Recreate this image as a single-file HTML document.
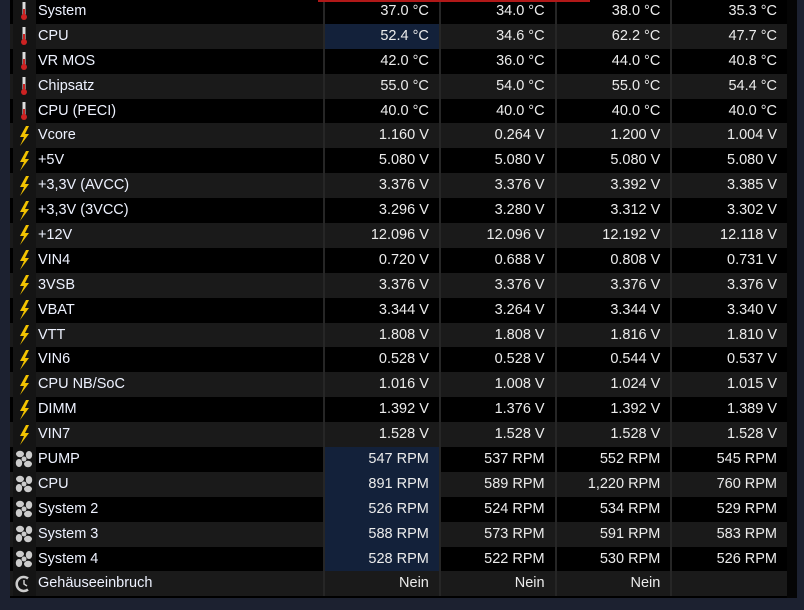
<!DOCTYPE html><html><head><meta charset="utf-8"><style>
body{margin:0;width:804px;height:610px;background:#1c2130;overflow:hidden;font-family:"Liberation Sans",sans-serif;font-size:14.5px;}
#t{position:absolute;left:10px;top:-1px;width:777px;height:599px;background:#000;}
#sb{position:absolute;left:787px;top:0;width:10px;height:598px;background:#050505;}
.r{height:24.9px;display:flex;position:relative;box-sizing:border-box}
.r:nth-child(odd){background:#000}.r:nth-child(even){background:#1a1a1a}
.i{width:23px;height:100%;background:#141414;display:flex;align-items:center;justify-content:center;margin-left:3px}
.l{width:286px;color:#eef2ff;line-height:25.5px;padding-left:2px}
.v{height:100%;line-height:25.5px;text-align:right;color:#ececec;border-left:2px solid #262626;box-sizing:border-box;padding-right:10px}
.c1{width:116px}.c2{width:116px}.c3{width:116px}.c4{width:117px}
.h{background:#13213a}
#red{position:absolute;left:318px;top:0;width:272px;height:2px;background:#b01818}
</style></head><body>
<div id="t">
<div class="r"><div class="i"><svg width="8" height="20"><rect x="2.5" y="1" width="3" height="13" fill="#ddd"/><rect x="3" y="8" width="2" height="8" fill="#c22"/><circle cx="4" cy="16" r="3" fill="#c22"/></svg></div><div class="l">System</div><div class="v c1">37.0 °C</div><div class="v c2">34.0 °C</div><div class="v c3">38.0 °C</div><div class="v c4">35.3 °C</div></div>
<div class="r"><div class="i"><svg width="8" height="20"><rect x="2.5" y="1" width="3" height="13" fill="#ddd"/><rect x="3" y="8" width="2" height="8" fill="#c22"/><circle cx="4" cy="16" r="3" fill="#c22"/></svg></div><div class="l">CPU</div><div class="v c1 h">52.4 °C</div><div class="v c2">34.6 °C</div><div class="v c3">62.2 °C</div><div class="v c4">47.7 °C</div></div>
<div class="r"><div class="i"><svg width="8" height="20"><rect x="2.5" y="1" width="3" height="13" fill="#ddd"/><rect x="3" y="8" width="2" height="8" fill="#c22"/><circle cx="4" cy="16" r="3" fill="#c22"/></svg></div><div class="l">VR MOS</div><div class="v c1">42.0 °C</div><div class="v c2">36.0 °C</div><div class="v c3">44.0 °C</div><div class="v c4">40.8 °C</div></div>
<div class="r"><div class="i"><svg width="8" height="20"><rect x="2.5" y="1" width="3" height="13" fill="#ddd"/><rect x="3" y="8" width="2" height="8" fill="#c22"/><circle cx="4" cy="16" r="3" fill="#c22"/></svg></div><div class="l">Chipsatz</div><div class="v c1">55.0 °C</div><div class="v c2">54.0 °C</div><div class="v c3">55.0 °C</div><div class="v c4">54.4 °C</div></div>
<div class="r"><div class="i"><svg width="8" height="20"><rect x="2.5" y="1" width="3" height="13" fill="#ddd"/><rect x="3" y="8" width="2" height="8" fill="#c22"/><circle cx="4" cy="16" r="3" fill="#c22"/></svg></div><div class="l">CPU (PECI)</div><div class="v c1">40.0 °C</div><div class="v c2">40.0 °C</div><div class="v c3">40.0 °C</div><div class="v c4">40.0 °C</div></div>
<div class="r"><div class="i"><svg width="14" height="22"><path d="M9 1L3 12h4l-4 9 9-12H8l4-8z" fill="#f2c200"/></svg></div><div class="l">Vcore</div><div class="v c1">1.160 V</div><div class="v c2">0.264 V</div><div class="v c3">1.200 V</div><div class="v c4">1.004 V</div></div>
<div class="r"><div class="i"><svg width="14" height="22"><path d="M9 1L3 12h4l-4 9 9-12H8l4-8z" fill="#f2c200"/></svg></div><div class="l">+5V</div><div class="v c1">5.080 V</div><div class="v c2">5.080 V</div><div class="v c3">5.080 V</div><div class="v c4">5.080 V</div></div>
<div class="r"><div class="i"><svg width="14" height="22"><path d="M9 1L3 12h4l-4 9 9-12H8l4-8z" fill="#f2c200"/></svg></div><div class="l">+3,3V (AVCC)</div><div class="v c1">3.376 V</div><div class="v c2">3.376 V</div><div class="v c3">3.392 V</div><div class="v c4">3.385 V</div></div>
<div class="r"><div class="i"><svg width="14" height="22"><path d="M9 1L3 12h4l-4 9 9-12H8l4-8z" fill="#f2c200"/></svg></div><div class="l">+3,3V (3VCC)</div><div class="v c1">3.296 V</div><div class="v c2">3.280 V</div><div class="v c3">3.312 V</div><div class="v c4">3.302 V</div></div>
<div class="r"><div class="i"><svg width="14" height="22"><path d="M9 1L3 12h4l-4 9 9-12H8l4-8z" fill="#f2c200"/></svg></div><div class="l">+12V</div><div class="v c1">12.096 V</div><div class="v c2">12.096 V</div><div class="v c3">12.192 V</div><div class="v c4">12.118 V</div></div>
<div class="r"><div class="i"><svg width="14" height="22"><path d="M9 1L3 12h4l-4 9 9-12H8l4-8z" fill="#f2c200"/></svg></div><div class="l">VIN4</div><div class="v c1">0.720 V</div><div class="v c2">0.688 V</div><div class="v c3">0.808 V</div><div class="v c4">0.731 V</div></div>
<div class="r"><div class="i"><svg width="14" height="22"><path d="M9 1L3 12h4l-4 9 9-12H8l4-8z" fill="#f2c200"/></svg></div><div class="l">3VSB</div><div class="v c1">3.376 V</div><div class="v c2">3.376 V</div><div class="v c3">3.376 V</div><div class="v c4">3.376 V</div></div>
<div class="r"><div class="i"><svg width="14" height="22"><path d="M9 1L3 12h4l-4 9 9-12H8l4-8z" fill="#f2c200"/></svg></div><div class="l">VBAT</div><div class="v c1">3.344 V</div><div class="v c2">3.264 V</div><div class="v c3">3.344 V</div><div class="v c4">3.340 V</div></div>
<div class="r"><div class="i"><svg width="14" height="22"><path d="M9 1L3 12h4l-4 9 9-12H8l4-8z" fill="#f2c200"/></svg></div><div class="l">VTT</div><div class="v c1">1.808 V</div><div class="v c2">1.808 V</div><div class="v c3">1.816 V</div><div class="v c4">1.810 V</div></div>
<div class="r"><div class="i"><svg width="14" height="22"><path d="M9 1L3 12h4l-4 9 9-12H8l4-8z" fill="#f2c200"/></svg></div><div class="l">VIN6</div><div class="v c1">0.528 V</div><div class="v c2">0.528 V</div><div class="v c3">0.544 V</div><div class="v c4">0.537 V</div></div>
<div class="r"><div class="i"><svg width="14" height="22"><path d="M9 1L3 12h4l-4 9 9-12H8l4-8z" fill="#f2c200"/></svg></div><div class="l">CPU NB/SoC</div><div class="v c1">1.016 V</div><div class="v c2">1.008 V</div><div class="v c3">1.024 V</div><div class="v c4">1.015 V</div></div>
<div class="r"><div class="i"><svg width="14" height="22"><path d="M9 1L3 12h4l-4 9 9-12H8l4-8z" fill="#f2c200"/></svg></div><div class="l">DIMM</div><div class="v c1">1.392 V</div><div class="v c2">1.376 V</div><div class="v c3">1.392 V</div><div class="v c4">1.389 V</div></div>
<div class="r"><div class="i"><svg width="14" height="22"><path d="M9 1L3 12h4l-4 9 9-12H8l4-8z" fill="#f2c200"/></svg></div><div class="l">VIN7</div><div class="v c1">1.528 V</div><div class="v c2">1.528 V</div><div class="v c3">1.528 V</div><div class="v c4">1.528 V</div></div>
<div class="r"><div class="i"><svg width="20" height="20" viewBox="0 0 20 20" fill="#ccc"><circle cx="10" cy="10" r="2.5"/><ellipse cx="6" cy="5" rx="4" ry="3.2"/><ellipse cx="15" cy="6" rx="3.2" ry="4"/><ellipse cx="14" cy="15" rx="4" ry="3.2"/><ellipse cx="5" cy="14" rx="3.2" ry="4"/></svg></div><div class="l">PUMP</div><div class="v c1 h">547 RPM</div><div class="v c2">537 RPM</div><div class="v c3">552 RPM</div><div class="v c4">545 RPM</div></div>
<div class="r"><div class="i"><svg width="20" height="20" viewBox="0 0 20 20" fill="#ccc"><circle cx="10" cy="10" r="2.5"/><ellipse cx="6" cy="5" rx="4" ry="3.2"/><ellipse cx="15" cy="6" rx="3.2" ry="4"/><ellipse cx="14" cy="15" rx="4" ry="3.2"/><ellipse cx="5" cy="14" rx="3.2" ry="4"/></svg></div><div class="l">CPU</div><div class="v c1 h">891 RPM</div><div class="v c2">589 RPM</div><div class="v c3">1,220 RPM</div><div class="v c4">760 RPM</div></div>
<div class="r"><div class="i"><svg width="20" height="20" viewBox="0 0 20 20" fill="#ccc"><circle cx="10" cy="10" r="2.5"/><ellipse cx="6" cy="5" rx="4" ry="3.2"/><ellipse cx="15" cy="6" rx="3.2" ry="4"/><ellipse cx="14" cy="15" rx="4" ry="3.2"/><ellipse cx="5" cy="14" rx="3.2" ry="4"/></svg></div><div class="l">System 2</div><div class="v c1 h">526 RPM</div><div class="v c2">524 RPM</div><div class="v c3">534 RPM</div><div class="v c4">529 RPM</div></div>
<div class="r"><div class="i"><svg width="20" height="20" viewBox="0 0 20 20" fill="#ccc"><circle cx="10" cy="10" r="2.5"/><ellipse cx="6" cy="5" rx="4" ry="3.2"/><ellipse cx="15" cy="6" rx="3.2" ry="4"/><ellipse cx="14" cy="15" rx="4" ry="3.2"/><ellipse cx="5" cy="14" rx="3.2" ry="4"/></svg></div><div class="l">System 3</div><div class="v c1 h">588 RPM</div><div class="v c2">573 RPM</div><div class="v c3">591 RPM</div><div class="v c4">583 RPM</div></div>
<div class="r"><div class="i"><svg width="20" height="20" viewBox="0 0 20 20" fill="#ccc"><circle cx="10" cy="10" r="2.5"/><ellipse cx="6" cy="5" rx="4" ry="3.2"/><ellipse cx="15" cy="6" rx="3.2" ry="4"/><ellipse cx="14" cy="15" rx="4" ry="3.2"/><ellipse cx="5" cy="14" rx="3.2" ry="4"/></svg></div><div class="l">System 4</div><div class="v c1 h">528 RPM</div><div class="v c2">522 RPM</div><div class="v c3">530 RPM</div><div class="v c4">526 RPM</div></div>
<div class="r"><div class="i"><svg width="18" height="18" viewBox="0 0 18 18"><path d="M13 3.5A7 7 0 1 0 13 14.5" fill="none" stroke="#ccc" stroke-width="2.5"/><path d="M9 5v4l3 2" fill="none" stroke="#ccc" stroke-width="1.5"/></svg></div><div class="l">Gehäuseeinbruch</div><div class="v c1">Nein</div><div class="v c2">Nein</div><div class="v c3">Nein</div><div class="v c4"></div></div>
</div>
<div id="sb"></div>
<div id="red"></div>
</body></html>
